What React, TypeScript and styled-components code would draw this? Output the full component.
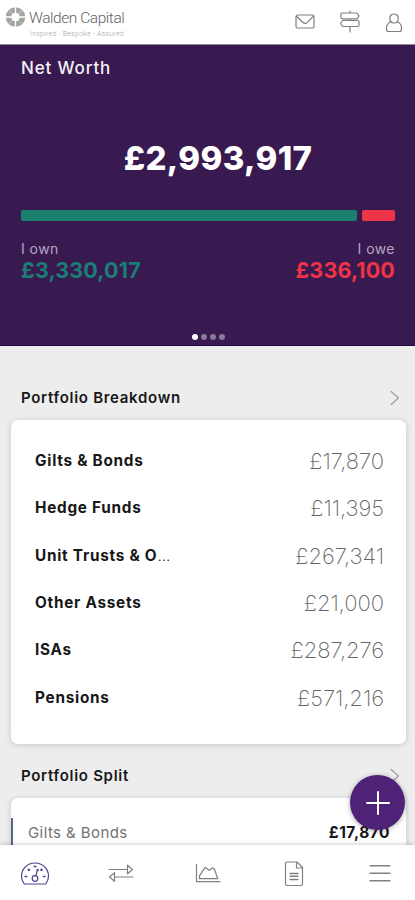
import React from "react";
import styled, { createGlobalStyle } from "styled-components";

const GlobalStyle = createGlobalStyle`
  * { box-sizing: border-box; }
  body { margin: 0; background: #ededed; }
`;

const Screen = styled.div`
  position: relative;
  width: 415px;
  height: 900px;
  display: flex;
  flex-direction: column;
  overflow: hidden;
  background: #ededed;
  color: #171717;
  font-family: Inter, "Liberation Sans", sans-serif;
`;

const Header = styled.header`
  flex: none;
  height: 45px;
  display: flex;
  justify-content: space-between;
  background: #fff;
  border-bottom: 1px solid #8d8898;
`;

const Brand = styled.div`
  display: flex;
  gap: 3px;
  padding: 6px 0 0 5px;
`;

const BrandText = styled.div`
  display: flex;
  flex-direction: column;
  padding-top: 3px;
`;

const BrandName = styled.span`
  font: 300 15.5px/18px Roboto, sans-serif;
  letter-spacing: -0.45px;
  color: #5f5f64;
  white-space: nowrap;
`;

const BrandTagline = styled.span`
  margin-top: 3px;
  padding-left: 1px;
  font: 300 7px/8px Roboto, sans-serif;
  letter-spacing: 0.26px;
  color: #a0a0a4;
  white-space: nowrap;
`;

const HeaderActions = styled.div`
  display: flex;
  align-items: flex-start;
  gap: 24px;
  padding: 10px 12px 0 0;
`;

const Hero = styled.section`
  flex: none;
  height: 301px;
  display: flex;
  flex-direction: column;
  padding: 12px 20px 5px 21px;
  background: #381a50;
  border-bottom: 1px solid #210640;
`;

const HeroTitle = styled.h1`
  margin: 0;
  font-size: 17px;
  line-height: 22px;
  font-weight: 500;
  letter-spacing: 0.85px;
  color: #f3eff6;
`;

const HeroTotal = styled.div`
  margin-top: 59px;
  padding-left: 20px;
  text-align: center;
  font-size: 33px;
  line-height: 40px;
  font-weight: 800;
  letter-spacing: 0.35px;
  color: #fff;
`;

const Ratio = styled.div`
  display: flex;
  gap: 5px;
  height: 11px;
  margin-top: 32px;
`;

const RatioPart = styled.div<{ $weight: number; $color: string }>`
  flex: ${(p) => p.$weight} 0 0;
  border-radius: 2px;
  background: ${(p) => p.$color};
`;

const Totals = styled.div`
  display: flex;
  justify-content: space-between;
  margin-top: 19px;
`;

const TotalGroup = styled.div<{ $end?: boolean }>`
  text-align: ${(p) => (p.$end ? "right" : "left")};
`;

const TotalLabel = styled.div`
  font-size: 14px;
  line-height: 18px;
  letter-spacing: 0.45px;
  color: #b5a5c3;
`;

const TotalValue = styled.div<{ $color: string }>`
  margin-top: -1px;
  font-size: 21.5px;
  line-height: 26px;
  font-weight: 700;
  letter-spacing: 0.15px;
  color: ${(p) => p.$color};
`;

const Pager = styled.div`
  display: flex;
  justify-content: center;
  gap: 3px;
  margin-top: auto;
`;

const PagerDot = styled.span<{ $active?: boolean }>`
  width: 6px;
  height: 6px;
  border-radius: 50%;
  background: ${(p) => (p.$active ? "#fff" : "#8b7a98")};
`;

const SectionHead = styled.div<{ $top: number }>`
  flex: none;
  height: 22px;
  display: flex;
  align-items: center;
  justify-content: space-between;
  margin: ${(p) => p.$top}px 15px 0 21px;
`;

const SectionTitle = styled.h2`
  margin: 0;
  font-size: 15px;
  line-height: 22px;
  font-weight: 600;
  letter-spacing: 0.7px;
`;

const Card = styled.div<{ $pad: number; $top: number; $height: number }>`
  flex: none;
  height: ${(p) => p.$height}px;
  margin: ${(p) => p.$top}px 9px 0 11px;
  padding-top: ${(p) => p.$pad}px;
  border-radius: 7px;
  background: #fff;
  box-shadow: 0 1px 6px rgba(0, 0, 0, 0.16);
`;

const AssetRow = styled.div`
  height: 47.3px;
  display: flex;
  align-items: center;
  justify-content: space-between;
  padding: 0 22px 0 24px;
`;

const AssetName = styled.span`
  font-size: 15.3px;
  line-height: 22px;
  font-weight: 650;
  letter-spacing: 0.75px;
`;

const Ellipsis = styled.span`
  font-weight: 300;
  letter-spacing: 0;
`;

const AssetValue = styled.span`
  font-size: 22px;
  line-height: 26px;
  font-weight: 200;
  letter-spacing: -0.05px;
  color: #666;
`;

const SplitRow = styled.div`
  height: 47px;
  display: flex;
  align-items: flex-start;
  justify-content: space-between;
  padding: 4px 16px 0 15px;
  border-left: 2px solid #56658c;
  line-height: 22px;
`;

const SplitName = styled.span`
  font-size: 15px;
  letter-spacing: 0.42px;
  color: #737373;
`;

const SplitValue = styled.span`
  font-size: 15.5px;
  font-weight: 650;
  letter-spacing: 0.5px;
`;

const AddButton = styled.button`
  position: absolute;
  left: 350px;
  top: 775px;
  width: 55px;
  height: 55px;
  padding: 0;
  display: grid;
  place-items: center;
  border: 0;
  border-radius: 50%;
  background: #4d2277;
  box-shadow: 0 1px 5px rgba(0, 0, 0, 0.35);
`;

const Content = styled.main`
  flex: 1;
  min-height: 0;
  overflow: hidden;
  display: flex;
  flex-direction: column;
`;

const TabBar = styled.nav`
  flex: none;
  height: 55px;
  display: flex;
  justify-content: center;
  align-items: flex-start;
  padding-top: 14px;
  background: #fff;
  box-shadow: 0 -1px 4px rgba(0, 0, 0, 0.18);
  z-index: 1;
`;

const Icon = styled.svg<{ $color?: string }>`
  display: block;
  fill: none;
  stroke: ${(p) => p.$color ?? "#808083"};
  stroke-width: 1.2;
  stroke-linecap: round;
  stroke-linejoin: round;
`;

const Logo = () => (
  <Icon width="21" height="22" viewBox="0 0 21 22" $color="#9a9c9a">
    <circle cx="10.5" cy="11" r="7" strokeWidth="5.6" stroke="#a3a5a3" />
    <path d="M10.500 1v20M.5 11h20" stroke="#fff" strokeWidth="1.300" />
    <path d="M3.800 4.300l3.600 3.600M17.200 4.300l-3.600 3.600M3.800 17.700l3.600-3.600M17.200 17.700l-3.600-3.600" stroke="#d0d1d0" strokeWidth=".8" />
    <circle cx="10.500" cy="11" r="3.900" fill="#fff" stroke="none" />
  </Icon>
);

const Chevron = () => (
  <Icon width="10" height="16" viewBox="0 0 10 16" $color="#9c9c9c">
    <path d="M1.200 1.500L8.400 8l-7.200 6.500" />
  </Icon>
);

const MailIcon = () => (
  <Icon width="20" height="24" viewBox="0 0 20 24">
    <rect x="1" y="5" width="18" height="13" rx="1.500" />
    <path d="M1.500 6.200l6.200 6.100c1.400 1.400 3.200 1.400 4.600 0l6.200-6.100" />
  </Icon>
);

const SignpostIcon = () => (
  <Icon width="22" height="24" viewBox="0 0 22 24">
    <path d="M11 1v2M11 8.800v1.700M11 16.500V22M3.300 3h14.800l1.900 2.900-1.900 2.900H3.300c-.8 0-1.300-.4-1.300-1.200V4.200C2 3.400 2.500 3 3.300 3zM3.700 10.500h15c.8 0 1.300.4 1.300 1.200v3.600c0 .8-.5 1.200-1.300 1.200h-15l-2.200-3z" />
  </Icon>
);

const UserIcon = () => (
  <Icon width="18" height="24" viewBox="0 0 18 24">
    <path d="M9 4c2.600 0 4.200 1.800 4.200 4.400S11.500 13 9 13s-4.200-2-4.200-4.600S6.400 4 9 4z" />
    <path d="M5.700 12C3 13 1.500 15 1.500 18v1.500c0 1.300.7 2 2 2h11c1.300 0 2-.7 2-2V18c0-3-1.500-5-4.200-6" />
  </Icon>
);

const GaugeIcon = () => (
  <Icon width="30" height="28" viewBox="0 0 30 28" $color="#51408e">
    <path d="M4.300 25C2.400 22.500 1.500 20 1.500 17.200 1.500 9.800 7.300 4 15 4s13.500 5.800 13.500 13.200c0 2.800-.9 5.300-2.800 7.800z" />
    <circle cx="15" cy="19.500" r="2.800" />
    <path d="M15.800 16.700l1.700-5.600" />
    <path d="M8.800 10.800v.1M21.500 10.800v.1M17.600 11v.1" strokeWidth="2.400" />
    <path d="M14 7.500h2M5 17.500h1.800M23.300 17.500H25" strokeWidth="1.300" />
  </Icon>
);

const TransferIcon = () => (
  <Icon width="26" height="28" viewBox="0 0 26 28">
    <path d="M1 10.500h18.500M19.500 6.200v8.600l5-4.300zM25 18H6.500M6.500 13.700v8.600l-5-4.300z" />
  </Icon>
);

const ChartIcon = () => (
  <Icon width="26" height="28" viewBox="0 0 26 28">
    <path d="M1.500 5.500v17.200H25M4.500 19.700v-2.900l5.600-8.500 4 3 3.700-2.500 1.700 1.500 3.200 9.400z" />
  </Icon>
);

const DocumentIcon = () => (
  <Icon width="20" height="28" viewBox="0 0 20 28">
    <path d="M3 3h10l5.500 5.500V25c0 .9-.6 1.500-1.500 1.500H3c-.9 0-1.500-.6-1.500-1.500V4.500C1.500 3.600 2.100 3 3 3zM12.500 3v6h6" />
    <path d="M6 14.500h8M6 17.200h8M6 20.500h8" strokeWidth="1.400" />
  </Icon>
);

const MenuIcon = () => (
  <Icon width="24" height="28" viewBox="0 0 24 28">
    <path d="M2 6.700h20M2 14.200h20M2 21.700h20" strokeWidth="1.400" />
  </Icon>
);

const TabItem = styled.button`
  flex: none;
  width: 86.2px;
  height: 28px;
  padding: 0;
  border: 0;
  background: none;
  display: grid;
  place-items: center;
`;

const assets = [
  { name: "Gilts & Bonds", value: "£17,870" },
  { name: "Hedge Funds", value: "£11,395" },
  { name: "Unit Trusts & O", cut: true, value: "£267,341" },
  { name: "Other Assets", value: "£21,000" },
  { name: "ISAs", value: "£287,276" },
  { name: "Pensions", value: "£571,216" },
];

const tabs = [
  { label: "Dashboard", icon: <GaugeIcon /> },
  { label: "Transfers", icon: <TransferIcon /> },
  { label: "Charts", icon: <ChartIcon /> },
  { label: "Documents", icon: <DocumentIcon /> },
  { label: "Menu", icon: <MenuIcon /> },
];

export default function App() {
  return (
    <Screen>
      <GlobalStyle />
      <Header>
        <Brand>
          <Logo />
          <BrandText>
            <BrandName>Walden Capital</BrandName>
            <BrandTagline>Inspired - Bespoke - Assured</BrandTagline>
          </BrandText>
        </Brand>
        <HeaderActions>
          <MailIcon />
          <SignpostIcon />
          <UserIcon />
        </HeaderActions>
      </Header>
      <Content>
        <Hero>
          <HeroTitle>Net Worth</HeroTitle>
          <HeroTotal>£2,993,917</HeroTotal>
          <Ratio>
            <RatioPart $weight={336} $color="#19806f" />
            <RatioPart $weight={33.5} $color="#ee3447" />
          </Ratio>
          <Totals>
            <TotalGroup>
              <TotalLabel>I own</TotalLabel>
              <TotalValue $color="#1c7d76">£3,330,017</TotalValue>
            </TotalGroup>
            <TotalGroup $end>
              <TotalLabel>I owe</TotalLabel>
              <TotalValue $color="#ee3447">£336,100</TotalValue>
            </TotalGroup>
          </Totals>
          <Pager>
            <PagerDot $active />
            <PagerDot />
            <PagerDot />
            <PagerDot />
          </Pager>
        </Hero>
        <SectionHead $top={41}>
          <SectionTitle>Portfolio Breakdown</SectionTitle>
          <Chevron />
        </SectionHead>
        <Card $top={11} $pad={17.5} $height={324}>
          {assets.map((a) => (
            <AssetRow key={a.name}>
              <AssetName>
                {a.name}
                {a.cut && <Ellipsis>...</Ellipsis>}
              </AssetName>
              <AssetValue>{a.value}</AssetValue>
            </AssetRow>
          ))}
        </Card>
        <SectionHead $top={21}>
          <SectionTitle>Portfolio Split</SectionTitle>
          <Chevron />
        </SectionHead>
        <Card $top={11} $pad={20} $height={200}>
          <SplitRow>
            <SplitName>Gilts &amp; Bonds</SplitName>
            <SplitValue>£17,870</SplitValue>
          </SplitRow>
        </Card>
      </Content>
      <TabBar>
        {tabs.map((t) => (
          <TabItem key={t.label} aria-label={t.label}>
            {t.icon}
          </TabItem>
        ))}
      </TabBar>
      <AddButton aria-label="Add">
        <Icon width="26" height="26" viewBox="0 0 26 26" $color="#fff">
          <path d="M13 2v22M2 13h22" strokeWidth="2" />
        </Icon>
      </AddButton>
    </Screen>
  );
}
